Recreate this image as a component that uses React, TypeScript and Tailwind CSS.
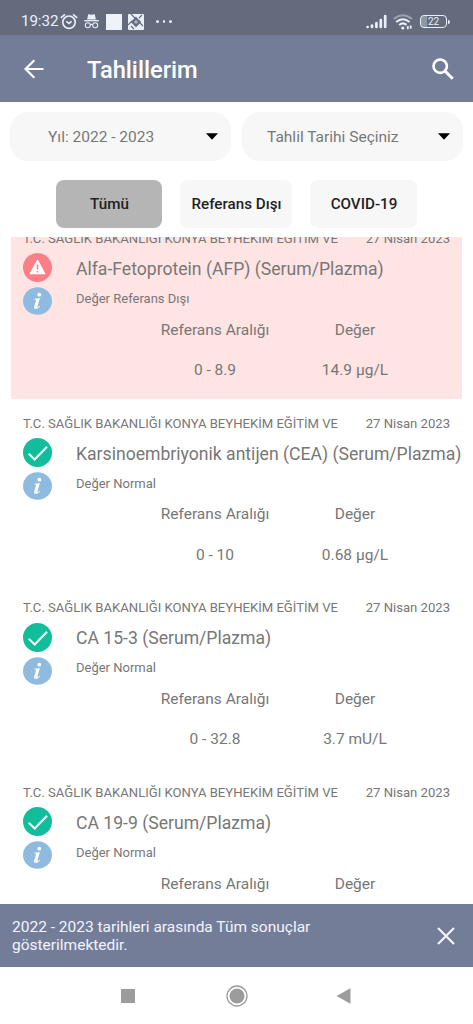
import { useState } from 'react';

type Result = {
  id: number;
  name: string;
  status: string;
  normal: boolean;
  range?: string;
  value?: string;
};

const HOSPITAL = 'T.C. SAĞLIK BAKANLIĞI KONYA BEYHEKİM EĞİTİM VE';
const DATE = '27 Nisan 2023';

const results: Result[] = [
  { id: 1, name: 'Alfa-Fetoprotein (AFP) (Serum/Plazma)', status: 'Değer Referans Dışı', normal: false, range: '0 - 8.9', value: '14.9 µg/L' },
  { id: 2, name: 'Karsinoembriyonik antijen (CEA) (Serum/Plazma)', status: 'Değer Normal', normal: true, range: '0 - 10', value: '0.68 µg/L' },
  { id: 3, name: 'CA 15-3 (Serum/Plazma)', status: 'Değer Normal', normal: true, range: '0 - 32.8', value: '3.7 mU/L' },
  { id: 4, name: 'CA 19-9 (Serum/Plazma)', status: 'Değer Normal', normal: true },
];

const StatusBar = () => (
  <div className="flex h-[35px] shrink-0 items-center bg-[#646b7d] pl-[21px] pr-[23px] pt-[8px] text-[#e9effb]">
    <span className="w-[39px] whitespace-nowrap pt-[1px] text-[15.2px] leading-none tracking-[-0.1px]">19:32</span>
    {/* Alarm */}
    <svg className="h-[18px] w-[18px]" viewBox="0 0 18 18" fill="none" stroke="currentColor" strokeWidth="1.6">
      <circle cx="9" cy="9.2" r="6.2" />
      <path d="M.8 4.8 5 1.4M13 1.4l4.2 3.4" />
      <path d="m6.3 8.4 2.7 2 2.6-2" />
    </svg>
    {/* Incognito */}
    <svg className="ml-[6px] h-[15px] w-[15px]" viewBox="0 0 15 15" fill="none" stroke="currentColor" strokeWidth="1.1">
      <path d="M3.8 5 4.7.8l2.8.5 2.8-.5.9 4.2z" fill="currentColor" />
      <path d="M.2 6.7h14.6" strokeWidth="1.3" />
      <circle cx="3.8" cy="11.2" r="2.5" />
      <circle cx="11.2" cy="11.2" r="2.5" />
      <path d="M6.2 10.8q1.3-.8 2.6 0" />
    </svg>
    <div className="ml-[7px] h-[16px] w-[16px] bg-[#eef2fb]" />
    <svg className="ml-[6px] h-[16px] w-[16px]" viewBox="0 0 16 16">
      <rect width="16" height="16" rx="1" fill="#e9effb" />
      <path d="M3 0 15 12M0 11l4-4M11 4l3-3M6 15l-3-3" stroke="#646b7d" strokeWidth="1.2" />
      <path d="m8 2.8 5.2 5.2L8 13.2 2.8 8z" fill="#646b7d" />
      <path d="m8 5.7 2.2 2.2L8 10.1 5.8 7.9z" fill="#aab1c1" />
    </svg>
    <div className="ml-[12px] flex gap-[4px]">
      <span className="h-[2.5px] w-[2.5px] rounded-full bg-current" />
      <span className="h-[2.5px] w-[2.5px] rounded-full bg-current" />
      <span className="h-[2.5px] w-[2.5px] rounded-full bg-current" />
    </div>
    {/* Signal */}
    <svg className="ml-auto h-[15px] w-[22px]" viewBox="0 0 22 15" stroke="currentColor" strokeWidth="2.7" strokeLinecap="round">
      <path d="M1.6 13v.01M6 13v-1.5M10.4 13V9.2M14.8 13V6M19.2 13V2" />
    </svg>
    {/* Wi-Fi */}
    <svg className="ml-[5px] h-[16px] w-[20px]" viewBox="0 0 20 16" fill="none" stroke="currentColor" strokeWidth="2">
      <path d="M.8 5q9-7.6 18.2 0" opacity=".4" />
      <path d="M3.2 8q6.6-5.6 13.4 0" />
      <path d="M6.2 10.9q3.6-3 7.4 0" />
      <circle cx="9.8" cy="14" r="1.6" fill="currentColor" stroke="none" />
      <path d="M14.8 15.2V12M17.700 11.500v3.200" strokeWidth="1.8" />
    </svg>
    <div className="ml-[7px] flex h-[13px] w-[27px] items-center justify-center rounded-[4px] border-[1.5px] border-current bg-linear-to-r from-[#8f96a6] from-25% to-transparent to-25% text-[10px] leading-none">
      22
    </div>
    <div className="ml-[1px] h-[4px] w-[2px] rounded-r-sm bg-current" />
  </div>
);

const Header = () => (
  <header className="flex h-[67px] shrink-0 items-center bg-[#747d97] pl-[24px] pr-[19px] text-white">
    <svg className="h-[20px] w-[20px]" viewBox="0 0 20 20" fill="none" stroke="currentColor" strokeWidth="2.2">
      <path d="M19.5 10H1.800M10.300 1.200 1.500 10l8.800 8.800" />
    </svg>
    <h1 className="ml-[43px] pt-[4px] text-[23.7px] font-medium leading-none">Tahlillerim</h1>
    <svg className="ml-auto h-[22px] w-[22px]" viewBox="0 0 22 22" fill="none" stroke="currentColor" strokeWidth="2.6">
      <circle cx="8.2" cy="8.2" r="6.7" />
      <path d="m13 13 7.7 7.7" strokeWidth="3" />
    </svg>
  </header>
);

const Caret = () => (
  <svg className="h-[7px] w-[12px]" viewBox="0 0 12 7">
    <path d="M0 .3h12L6 6.700z" fill="#000" />
  </svg>
);

const StatusIcon = ({ normal }: { normal: boolean }) =>
  normal ? (
    <svg className="h-[29px] w-[29px] shrink-0" viewBox="0 0 29 29" fill="none">
      <circle cx="14.5" cy="14.5" r="14.5" fill="#12bd9b" />
      <path d="m5.7 15.8 6 5.7L24 8.700" stroke="#eafff9" strokeWidth="2.2" />
    </svg>
  ) : (
    <svg className="h-[29px] w-[29px] shrink-0" viewBox="0 0 29 29" fill="none">
      <circle cx="14.5" cy="14.5" r="14.5" fill="#fb7f86" />
      <path d="M14.5 7 22 20.800H7z" fill="#fff" stroke="#fff" strokeWidth="1" strokeLinejoin="round" />
      <path d="M14.5 11.500v5M14.500 18v1.600" stroke="#fb7f86" strokeWidth="1.6" />
    </svg>
  );

const InfoIcon = () => (
  <svg className="h-[28px] w-[29px] shrink-0" viewBox="0 0 29 28">
    <ellipse cx="14.5" cy="14" rx="14.5" ry="13.8" fill="#8fbbe0" />
    <circle cx="16.3" cy="7.7" r="1.9" fill="#fff" />
    <path d="M11.3 11.8q3-.2 5.600-.8l-2.400 8.300q-.3 1.200.6.700l1.500-1.200.5.500q-2 2.500-4.300 2.600-2.300-.1-1.500-2.700l1.700-5.700q.2-.9-.7-1l-1.100-.1z" fill="#fff" />
  </svg>
);

const ResultCard = ({ result }: { result: Result }) => (
  <div className={`mx-[11px] mb-[12px] h-[172.7px] shrink-0 ${result.normal ? 'bg-white' : 'bg-[#ffe4e4]'}`}>
    <div className="flex h-[27px] items-start justify-between whitespace-nowrap pl-[12px] pr-[12px] pt-[5.5px] text-[13.1px] leading-[14px]">
      <span>{HOSPITAL}</span>
      <span>{DATE}</span>
    </div>
    <div className="flex h-[62px] pl-[12px]">
      <div className="flex w-[53px] shrink-0 flex-col gap-[5px]">
        <StatusIcon normal={result.normal} />
        <InfoIcon />
      </div>
      <div className="whitespace-nowrap">
        <h2 className="flex h-[33px] items-center text-[17.6px] leading-none">{result.name}</h2>
        <p className="flex h-[24px] items-center text-[13px] leading-none">{result.status}</p>
      </div>
    </div>
    <div className="grid grid-cols-[140px_140px] pl-[134px] text-center text-[15.5px] leading-none">
      <span className="pt-[7.3px]">Referans Aralığı</span>
      <span className="pt-[7.3px]">Değer</span>
      {result.range && <span className="pt-[25px]">{result.range}</span>}
      {result.value && <span className="pt-[25px]">{result.value}</span>}
    </div>
  </div>
);

const App: React.FC = () => {
  const [tab, setTab] = useState('all');
  const [showNotice, setShowNotice] = useState(true);

  const tabClass = (id: string) =>
    `h-[48px] rounded-[8px] pl-[1px] pt-[1px] text-[15.2px] font-medium text-[#1f1f1f] ${tab === id ? 'bg-[#b5b5b5]' : 'bg-[#f7f7f7]'}`;

  return (
    <div className="flex h-[1024px] w-[473px] flex-col overflow-hidden bg-white font-['Roboto',sans-serif] text-[#777777]">
      <StatusBar />
      <Header />

      {/* Filters */}
      <div className="flex shrink-0 gap-[11px] px-[10px] pt-[10px] text-[15.5px]">
        <button className="flex h-[49px] w-[221px] items-center justify-between rounded-[18px] bg-[#f7f7f7] pl-[38px] pr-[13px]">
          <span className="pt-[2px]">Yıl: 2022 - 2023</span>
          <Caret />
        </button>
        <button className="flex h-[49px] w-[221px] items-center justify-between rounded-[18px] bg-[#f7f7f7] pl-[25px] pr-[13px]">
          <span className="pt-[2px]">Tahlil Tarihi Seçiniz</span>
          <Caret />
        </button>
      </div>

      <div className="flex shrink-0 gap-[18px] pb-[9px] pl-[56px] pt-[19px]">
        <button className={`w-[106px] ${tabClass('all')}`} onClick={() => setTab('all')}>Tümü</button>
        <button className={`w-[112px] ${tabClass('out')}`} onClick={() => setTab('out')}>Referans Dışı</button>
        <button className={`w-[107px] ${tabClass('covid')}`} onClick={() => setTab('covid')}>COVID-19</button>
      </div>

      {/* Results, scrolled a little past the top of the first card */}
      <main className="min-h-0 flex-1 overflow-hidden">
        <div className="-mt-[10.7px] flex flex-col">
          {results.map((result) => (
            <ResultCard key={result.id} result={result} />
          ))}
        </div>
      </main>

      {showNotice && (
        <div className="flex h-[63px] shrink-0 items-center justify-between bg-[#747d97] pl-[12px] pr-[18px] text-[#f1f5ff]">
          <p className="w-[320px] pt-[1px] text-[15.5px] leading-[18px]">
            2022 - 2023 tarihleri arasında Tüm sonuçlar gösterilmektedir.
          </p>
          <button onClick={() => setShowNotice(false)}>
            <svg className="h-[18px] w-[18px]" viewBox="0 0 18 18" stroke="currentColor" strokeWidth="2.2">
              <path d="m1 1 16 16M17 1 1 17" />
            </svg>
          </button>
        </div>
      )}

      {/* Android navigation */}
      <nav className="flex h-[57px] shrink-0 items-center bg-white pl-[121px] text-[#9c9c9c]">
        <div className="h-[14px] w-[14px] bg-current" />
        <svg className="ml-[91px] h-[22px] w-[22px]" viewBox="0 0 22 22">
          <circle cx="11" cy="11" r="10" fill="none" stroke="currentColor" strokeWidth="1.3" />
          <circle cx="11" cy="11" r="7.5" fill="currentColor" />
        </svg>
        <svg className="ml-[88px] h-[16px] w-[15px]" viewBox="0 0 15 16">
          <path d="M14.5.3v15.400L.5 8z" fill="currentColor" />
        </svg>
      </nav>
    </div>
  );
};

export default App;
